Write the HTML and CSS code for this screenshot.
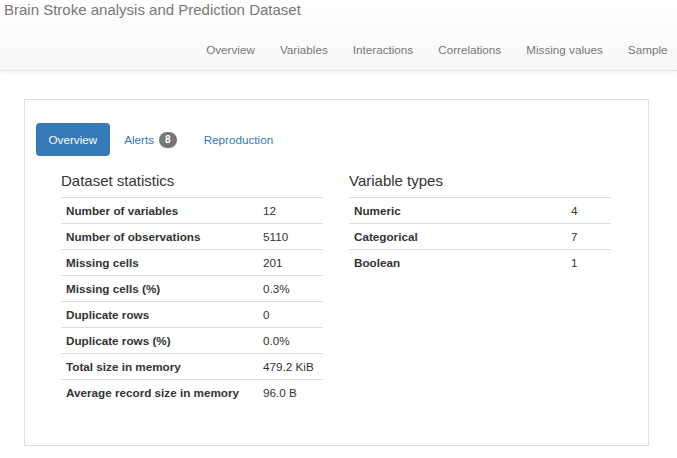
FILE: index.html
```html
<!DOCTYPE html>
<html>
<head>
<meta charset="utf-8">
<title>Brain Stroke analysis and Prediction Dataset</title>
<link rel="stylesheet" href="styles.css">
</head>
<body>
<header class="navbar">
  <div class="brand">Brain Stroke analysis and Prediction Dataset</div>
  <nav class="nav">
    <a href="#">Overview</a>
    <a href="#">Variables</a>
    <a href="#">Interactions</a>
    <a href="#">Correlations</a>
    <a href="#">Missing values</a>
    <a href="#">Sample</a>
  </nav>
</header>
<main class="panel">
  <div class="tabs">
    <a href="#" class="tab active">Overview</a>
    <a href="#" class="tab">Alerts <span class="badge">8</span></a>
    <a href="#" class="tab">Reproduction</a>
  </div>
  <div class="stats">
    <section class="col">
      <h4>Dataset statistics</h4>
      <table class="table left">
        <tr><th>Number of variables</th><td>12</td></tr>
        <tr><th>Number of observations</th><td>5110</td></tr>
        <tr><th>Missing cells</th><td>201</td></tr>
        <tr><th>Missing cells (%)</th><td>0.3%</td></tr>
        <tr><th>Duplicate rows</th><td>0</td></tr>
        <tr><th>Duplicate rows (%)</th><td>0.0%</td></tr>
        <tr><th>Total size in memory</th><td>479.2 KiB</td></tr>
        <tr><th>Average record size in memory</th><td>96.0 B</td></tr>
      </table>
    </section>
    <section class="col">
      <h4>Variable types</h4>
      <table class="table right">
        <tr><th>Numeric</th><td>4</td></tr>
        <tr><th>Categorical</th><td>7</td></tr>
        <tr><th>Boolean</th><td>1</td></tr>
      </table>
    </section>
  </div>
</main>
</body>
</html>
```
FILE: styles.css
```css
html, body {
  margin: 0;
  padding: 0;
  background: #fff;
  font-family: "Liberation Sans", Arial, sans-serif;
  color: #333;
  font-size: 11.7px;
}
a { text-decoration: none; }

.navbar {
  height: 70px;
  border-bottom: 1px solid #e4e4e4;
  background: linear-gradient(to bottom, #fff 0, #f8f8f8 100%);
  box-shadow: 0 1px 5px rgba(0,0,0,.075);
  overflow: hidden;
  display: flex;
  flex-direction: column;
}
.brand {
  font-size: 15px;
  line-height: 18px;
  color: #777;
  margin: 1px 0 0 4px;
}
.nav {
  display: flex;
  justify-content: flex-end;
  margin-top: 22px;
  margin-right: -3px;
}
.nav a {
  color: #777;
  font-size: 11.7px;
  line-height: 17px;
  padding: 0 12.5px;
}

.panel {
  margin: 28px 0 0 24px;
  border: 1px solid #dddde3;
  padding: 23px 0 40px 11px;
  box-sizing: content-box;
  width: 612px;
}
.tabs {
  display: flex;
  gap: 2px;
}
.tab {
  display: flex;
  align-items: center;
  gap: 5px;
  padding: 8px 12.5px;
  line-height: 17px;
  border-radius: 4px;
  color: #337ab7;
  font-size: 11.7px;
}
.tab.active {
  background: #337ab7;
  color: #fff;
}
.badge {
  display: inline-block;
  background: #777;
  color: #fff;
  font-weight: bold;
  font-size: 10px;
  line-height: 14px;
  padding: 1px 6px;
  border-radius: 8px;
}

.stats {
  display: grid;
  grid-template-columns: 262px 262px;
  column-gap: 26px;
  padding-left: 25px;
  margin-top: 16px;
}
.col h4 {
  margin: 0 0 7.5px;
  font-size: 15px;
  font-weight: normal;
  line-height: 17px;
  color: #333;
}
.table {
  width: 100%;
  border-collapse: collapse;
  border-spacing: 0;
}
.table th, .table td {
  border-top: 1px solid #ddd;
  padding: 4px 5px;
  line-height: 17px;
  font-size: 11.7px;
  text-align: left;
  vertical-align: top;
}
.table th { font-weight: bold; color: #333; }
.table td { color: #333; }
.table.left th { width: 187px; }
.table.right th { width: 207px; }
```
